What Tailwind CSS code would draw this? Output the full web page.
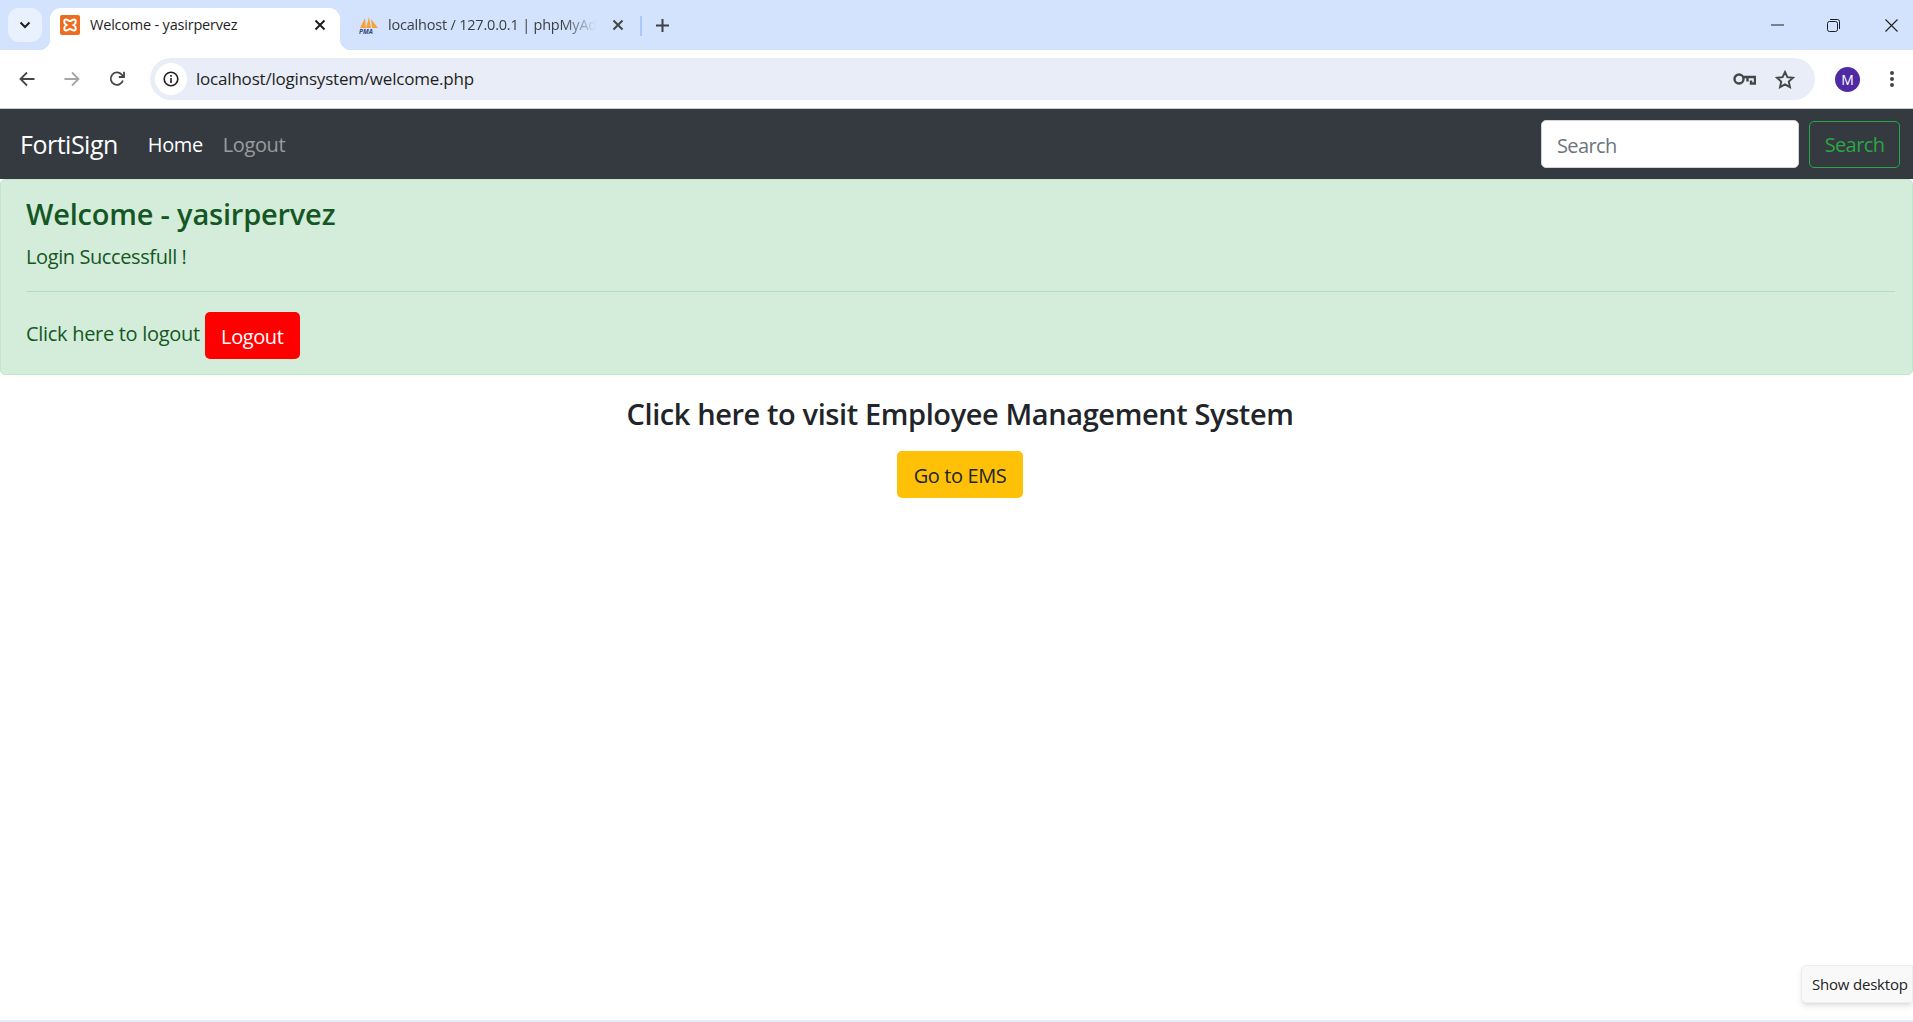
<!DOCTYPE html>
<html lang="en">
  <head>
    <meta charset="UTF-8" />
    <title>Welcome - yasirpervez</title>
    <script src="https://cdn.jsdelivr.net/npm/@tailwindcss/browser@4"></script>
  </head>
  <body class="relative h-[1022px] w-[1913px] overflow-hidden bg-white font-['Open_Sans',sans-serif]">
    <!-- tab strip -->
    <div class="relative flex h-[50px] items-start bg-[#d3e3fd] pt-2">
      <button class="ml-[8px] flex h-[34px] w-[34px] items-center justify-center rounded-[11px] bg-[#e9f0fe]">
        <svg width="14" height="14" viewBox="0 0 14 14" fill="none" stroke="#1f1f1f" stroke-width="2"><path d="M2.5 4.5 7 9l4.5-4.5" /></svg>
      </button>
      <!-- active tab -->
      <div class="relative ml-[8px] flex h-[42px] w-[290px] items-center rounded-t-[11px] bg-white pb-[8px] pl-[10px] pr-[12px]">
        <div class="absolute -left-[11px] bottom-0 h-[11px] w-[11px] bg-[radial-gradient(circle_at_0_0,#d3e3fd_11px,#fff_11.5px)]"></div>
        <div class="absolute -right-[11px] bottom-0 h-[11px] w-[11px] bg-[radial-gradient(circle_at_100%_0,#d3e3fd_11px,#fff_11.5px)]"></div>
        <svg width="20" height="20" viewBox="0 0 20 20" class="shrink-0">
          <rect width="20" height="20" rx="2" fill="#ee6c1f" />
          <path d="M6 4.500c2 0 2.500 1.500 4 1.500s2-1.500 4-1.500 3 3.500-.5 5.500c3.500 2 2.500 5.500.5 5.500s-2.500-1.500-4-1.500-2 1.500-4 1.500-3-3.500.5-5.500C3 8 4 4.500 6 4.500Z" fill="none" stroke="#fff" stroke-width="2" />
        </svg>
        <span class="ml-[10px] whitespace-nowrap text-[14.500px] tracking-[-0.2px] text-[#1f1f1f]">Welcome - yasirpervez</span>
        <svg width="12" height="12" viewBox="0 0 12 12" class="ml-auto mr-[2px]" stroke="#1f1f1f" stroke-width="2"><path d="M1.500 1.500l9 9M10.500 1.500l-9 9" /></svg>
      </div>
      <!-- inactive tab -->
      <div class="ml-[19px] flex h-[42px] w-[268px] items-center pb-[8px]">
        <svg width="20" height="20" viewBox="0 0 20 20" class="shrink-0">
          <path d="M1 13 6 3l1 10ZM7 13l3-11 2 11ZM13 13l-1-9 7 9Z" fill="#f7a13c" />
          <text x="0" y="19" font-size="6.500" font-weight="700" font-style="italic" fill="#2f4a80" font-family="Open Sans, sans-serif">PMA</text>
        </svg>
        <span class="ml-[9px] w-[208px] whitespace-nowrap text-[14.500px] tracking-[-0.2px] text-[#3c4043] [mask-image:linear-gradient(to_right,#000_175px,transparent_208px)]">localhost / 127.0.0.1 | phpMyAd</span>
        <svg width="12" height="12" viewBox="0 0 12 12" class="ml-[16px]" stroke="#444746" stroke-width="2"><path d="M1.500 1.500l9 9M10.500 1.500l-9 9" /></svg>
      </div>
      <div class="ml-[13px] mt-[8px] h-[20px] w-[2px] bg-[#a8c7fa]"></div>
      <svg width="13" height="13" viewBox="0 0 13 13" class="ml-[14px] mt-[11px]" stroke="#3c4043" stroke-width="2"><path d="M6.500 0v13M0 6.500h13" /></svg>
      <!-- window controls -->
      <div class="ml-auto flex h-[34px] items-center gap-[43px] pr-[15px]">
        <svg width="13" height="2" viewBox="0 0 13 2" stroke="#1f1f1f"><path d="M0 1h13" /></svg>
        <svg width="13" height="13" viewBox="0 0 13 13" fill="none" stroke="#1f1f1f"><rect x=".5" y="2.500" width="10" height="10" rx="2" /><path d="M3 .5h7.500a2 2 0 0 1 2 2V10" /></svg>
        <svg width="13" height="13" viewBox="0 0 13 13" class="ml-[2px]" stroke="#1f1f1f" stroke-width="1.100"><path d="M.5.5l12 12M12.500.5l-12 12" /></svg>
      </div>
    </div>

    <!-- toolbar -->
    <div class="flex h-[59px] items-center rounded-tl-[11px] border-b border-[#c8ccd2] bg-white">
      <div class="flex w-[150px] items-center gap-[29px] pl-[19px]">
        <svg width="16" height="16" viewBox="0 0 16 16" fill="none" stroke="#444746" stroke-width="1.800"><path d="M15.500 8H1.500M8 1.500 1.500 8 8 14.500" /></svg>
        <svg width="16" height="16" viewBox="0 0 16 16" fill="none" stroke="#a3a5a7" stroke-width="1.800"><path d="M.5 8h14M8 1.500 14.500 8 8 14.500" /></svg>
        <svg width="16" height="16" viewBox="0 0 16 16" fill="none" stroke="#444746" stroke-width="1.800"><path d="M13.900 9.500A6.200 6.200 0 1 1 12.500 3.400L14.500 5.400" /><path d="M15 .8V6H9.800" /></svg>
      </div>
      <div class="flex h-[42px] w-[1665px] items-center rounded-full bg-[#e9edf7] pl-[5px] pr-[20px]">
        <div class="flex h-[32px] w-[32px] items-center justify-center rounded-full bg-white">
          <svg width="16" height="16" viewBox="0 0 16 16" fill="none" stroke="#1f1f1f" stroke-width="1.600"><circle cx="8" cy="8" r="6.800" /><path d="M8 7v5M8 4v1.800" /></svg>
        </div>
        <span class="ml-[9px] text-[17px] tracking-[-0.2px] text-[#1f1f1f]">localhost/loginsystem/welcome.php</span>
        <svg width="23" height="14" viewBox="0 0 23 14" class="ml-auto" fill="none" stroke="#444746" stroke-width="2.400"><circle cx="6" cy="7" r="4.500" /><path d="M10.500 5h11.500v6.500h-4V8.500M14.500 5v4.500" /></svg>
        <svg width="20" height="19" viewBox="0 0 20 19" class="ml-[19px]" fill="none" stroke="#444746" stroke-width="1.900"><path d="m10 2 2.400 5.200 5.600.6-4.200 3.800 1.200 5.600L10 14.400l-5 2.800 1.200-5.600L2 7.800l5.600-.6Z" /></svg>
      </div>
      <div class="ml-[20px] flex h-[25px] w-[25px] items-center justify-center rounded-full bg-[#4f2aa5] text-[14px] text-white">M</div>
      <svg width="4" height="18" viewBox="0 0 4 18" class="ml-[30px]" fill="#444746"><circle cx="2" cy="3" r="2" /><circle cx="2" cy="9" r="2" /><circle cx="2" cy="15" r="2" /></svg>
    </div>

    <!-- navbar -->
    <nav class="flex h-[70px] items-center bg-[#343a40] pl-[20px] pr-[13px]">
      <a class="pt-[2px] text-[25px] tracking-[-0.5px] text-white">FortiSign</a>
      <a class="ml-[30px] pt-[2px] text-[20px] tracking-[-0.4px] text-white">Home</a>
      <a class="ml-[20px] pt-[2px] text-[20px] tracking-[-0.4px] text-white/50">Logout</a>
      <div class="ml-auto flex items-center gap-[10px]">
        <input placeholder="Search" class="h-[48px] w-[258px] rounded-[5px] border border-[#ced4da] bg-white px-[15px] pt-[2px] text-[20px] tracking-[-0.6px] placeholder:text-[#6c757d]" />
        <button class="h-[47px] w-[91px] rounded-[5px] border border-[#28a745] pt-[2px] text-[20px] tracking-[-0.6px] text-[#28a745]">Search</button>
      </div>
    </nav>

    <!-- alert -->
    <div class="h-[196px] rounded-[5px] border border-[#c3e6cb] bg-[#d4edda] pl-[25px] pr-[17px] pt-[16px] text-[#155724]">
      <h4 class="text-[29px] leading-[36px] font-semibold tracking-[-0.2px]">Welcome - yasirpervez</h4>
      <p class="mt-[10px] text-[20px] leading-[30px] tracking-[-0.4px]">Login Successfull !</p>
      <hr class="mt-[19px] border-t border-[#b1dfbb]" />
      <div class="mt-[20px] flex items-start">
        <span class="mt-[7px] text-[20px] leading-[30px] tracking-[-0.3px]">Click here to logout</span>
        <button class="ml-[5px] h-[47px] w-[95px] rounded-[5px] bg-[#ff0000] pt-[2px] text-[20px] tracking-[-0.4px] text-white">Logout</button>
      </div>
    </div>

    <!-- ems section -->
    <div class="flex flex-col items-center pl-[7px] pt-[20px]">
      <h3 class="text-[29px] leading-[38px] font-semibold tracking-[-0.4px] text-[#212529]">Click here to visit Employee Management System</h3>
      <button class="mt-[18px] h-[47px] w-[126px] rounded-[5px] bg-[#ffc107] pt-[2px] text-[20px] tracking-[-0.4px] text-[#212529]">Go to EMS</button>
    </div>

    <!-- tooltip from the os -->
    <div class="absolute left-[1801px] top-[965px] flex h-[38px] w-[112px] items-center rounded-l-[5px] border border-[#eeeeee] bg-[#f9f9f9] pl-[10px] text-[15px] tracking-[-0.2px] whitespace-nowrap text-[#222] shadow-md">Show desktop</div>
    <div class="absolute bottom-0 left-0 h-[2px] w-full bg-[#e3edf9]"></div>
  </body>
</html>
